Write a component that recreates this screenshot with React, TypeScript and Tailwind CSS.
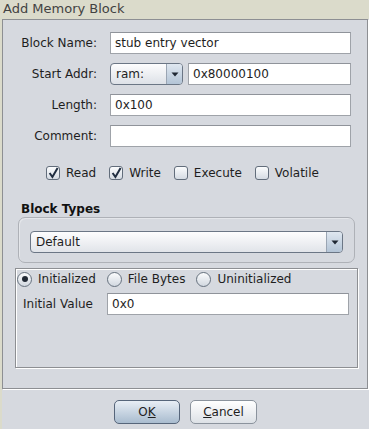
import React from 'react';

const font = "font-['DejaVu_Sans',sans-serif]";

function Field({ value, className = '' }: { value?: string; className?: string }) {
  return (
    <div
      className={`h-[22px] border border-[#9fa3a9] border-t-[#8f939a] bg-white pl-[4px] text-[12px] leading-[20px] text-[#1e1e1e] ${className}`}
    >
      {value}
    </div>
  );
}

function Arrow() {
  return (
    <svg width="8" height="5" viewBox="0 0 8 5">
      <path d="M0.5 0.5 L7.5 0.5 L4 4.5 Z" fill="#1f2733" />
    </svg>
  );
}

function Check({ checked, label }: { checked?: boolean; label: string }) {
  return (
    <div className="flex items-center gap-[6px]">
      <div className="relative h-[14px] w-[14px] rounded-[3px] border border-[#626d7b] bg-gradient-to-b from-[#fbfcfd] to-[#d5dbe3]">
        {checked && (
          <svg className="absolute left-[1px] top-[0px]" width="11" height="12" viewBox="0 0 11 12">
            <path d="M1.6 6 L4.4 10 L9.6 1" fill="none" stroke="#1f2d40" strokeWidth="2" />
          </svg>
        )}
      </div>
      <span className="text-[12px] text-[#1e1e1e]">{label}</span>
    </div>
  );
}

function Radio({ checked, label }: { checked?: boolean; label: string }) {
  return (
    <div className="flex items-center gap-[6px]">
      <div className="flex h-[15px] w-[15px] items-center justify-center rounded-full border border-[#66717e] bg-gradient-to-b from-[#fbfcfd] to-[#d2d8e0]">
        {checked && <div className="h-[6px] w-[6px] rounded-full bg-[#222a35]" />}
      </div>
      <span className="text-[12px] text-[#1e1e1e]">{label}</span>
    </div>
  );
}

const rows: Array<{ label: string; value?: string; addr?: boolean }> = [
  { label: 'Block Name:', value: 'stub entry vector' },
  { label: 'Start Addr:', value: '0x80000100', addr: true },
  { label: 'Length:', value: '0x100' },
  { label: 'Comment:', value: '' },
];

export default function App() {
  return (
    <div className={`flex h-[429px] w-[369px] flex-col overflow-hidden bg-[#dbdbcb] ${font}`}>
      <div className="h-[19px] shrink-0 pl-[3px] text-[13px] leading-[18px] text-[#424242]">Add Memory Block</div>

      <div className="ml-[2px] flex flex-1 flex-col bg-[#d6d9df]">
        <div className="w-[366px] border border-[#8d8f93] shadow-[1px_1px_0_#ffffff]">
          <div className="grid grid-cols-[94px_241px] gap-x-[13px] gap-y-[9px] pt-[12px]">
            {rows.map((r) => (
              <React.Fragment key={r.label}>
                <div className="text-right text-[12px] leading-[22px] text-[#1e1e1e]">{r.label}</div>
                {r.addr ? (
                  <div className="flex gap-[5px]">
                    <div className="flex h-[22px] w-[73px] items-stretch overflow-hidden rounded-[4px] border border-[#6b7685] bg-gradient-to-b from-[#fdfdfe] to-[#dde1e7]">
                      <span className="flex-1 pl-[5px] text-[12px] leading-[20px] text-[#1e1e1e]">ram:</span>
                      <div className="flex w-[16px] items-center justify-center border-l border-[#9aa5b3] bg-gradient-to-b from-[#dfe7f0] to-[#b3c4d6]">
                        <Arrow />
                      </div>
                    </div>
                    <Field value={r.value} className="flex-1" />
                  </div>
                ) : (
                  <Field value={r.value} />
                )}
              </React.Fragment>
            ))}
          </div>

          <div className="mt-[17px] flex h-[17px] items-center gap-[13px] pl-[43px]">
            <Check checked label="Read" />
            <Check checked label="Write" />
            <Check label="Execute" />
            <Check label="Volatile" />
          </div>

          <div className="mt-[21px] pl-[18px] text-[12px] font-bold leading-[14px] text-[#111]">Block Types</div>

          <div className="ml-[15px] mt-[1px] h-[46px] w-[337px] rounded-[7px] border border-[#aeb1b7] pl-[11px] pr-[11px] pt-[13px] shadow-[inset_1px_1px_0_#e4e6ea]">
            <div className="flex h-[22px] items-stretch overflow-hidden rounded-[4px] border border-[#6b7685] bg-gradient-to-b from-[#fdfdfe] to-[#e1e4e9]">
              <span className="flex-1 pl-[5px] text-[12px] leading-[20px] text-[#1e1e1e]">Default</span>
              <div className="flex w-[16px] items-center justify-center border-l border-[#9aa5b3] bg-gradient-to-b from-[#dfe7f0] to-[#b3c4d6]">
                <Arrow />
              </div>
            </div>
          </div>

          <div className="mb-[20px] ml-[12px] mt-[5px] h-[100px] w-[343px] border border-[#8d8f93] shadow-[inset_1px_1px_0_#ffffff,1px_1px_0_#ffffff]">
            <div className="flex h-[17px] items-center gap-[11px] pl-[1px] pt-[3px]">
              <Radio checked label="Initialized" />
              <Radio label="File Bytes" />
              <Radio label="Uninitialized" />
            </div>
            <div className="mt-[7px] flex items-center">
              <div className="w-[91px] pl-[7px] text-[12px] leading-[22px] text-[#1e1e1e]">Initial Value</div>
              <Field value="0x0" className="w-[242px]" />
            </div>
          </div>
        </div>

        <div className="flex justify-center gap-[10px] pt-[11px]">
          <button className="h-[24px] w-[66px] rounded-[5px] border border-[#56657a] bg-gradient-to-b from-[#e8eef5] to-[#a9bccf] text-[12px] text-[#1e1e1e]">
            O<span className="underline">K</span>
          </button>
          <button className="h-[24px] w-[67px] rounded-[5px] border border-[#8b939d] bg-gradient-to-b from-[#ffffff] to-[#dde1e6] text-[12px] text-[#1e1e1e]">
            <span className="underline">C</span>ancel
          </button>
        </div>
      </div>
    </div>
  );
}
